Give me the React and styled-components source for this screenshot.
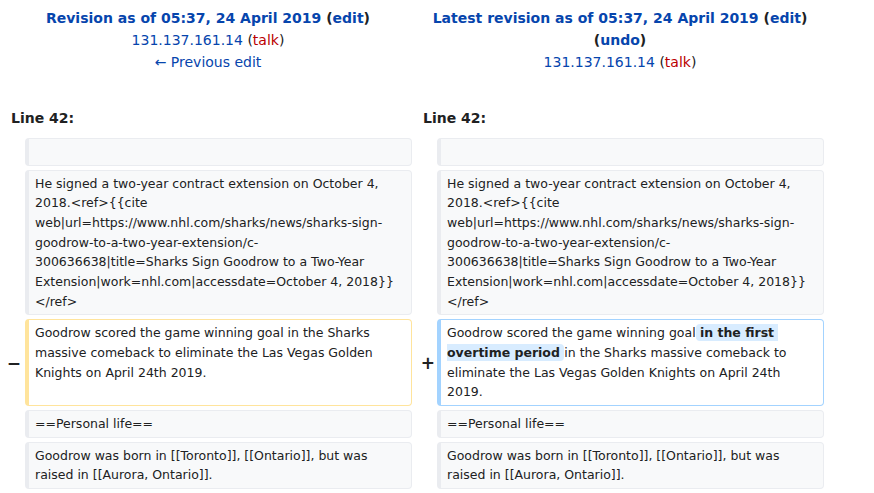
import styled, { createGlobalStyle } from 'styled-components';

const GlobalStyle = createGlobalStyle`
  body {
    margin: 0;
    background: #fff;
    color: #202122;
    font-family: "DejaVu Sans", sans-serif;
  }
`;

const Page = styled.div`
  width: 828px;
  padding: 0 4px;
  box-sizing: border-box;
`;

const TitleRow = styled.div`
  display: grid;
  grid-template-columns: 408px 408px;
  column-gap: 4px;
  padding-top: 7px;
`;

const Title = styled.div`
  text-align: center;
  font-size: 14px;
  line-height: 22px;
`;

const Line = styled.div`
  font-weight: ${(p) => (p.$bold ? 'bold' : 'normal')};
`;

const Link = styled.a`
  color: ${(p) => (p.$red ? '#ba0000' : '#0645ad')};
  text-decoration: none;
  cursor: pointer;
`;

const Paren = styled.span`
  color: #202122;
`;

const DiffGrid = styled.div`
  display: grid;
  grid-template-columns: 17px 387px 17px 387px;
  gap: 4px;
  margin-top: 35px;
`;

const LineNo = styled.div`
  grid-column: span 2;
  font-weight: bold;
  font-size: 14px;
  line-height: 20px;
  padding: 0 7px 6px;
`;

const Marker = styled.div`
  display: flex;
  align-items: center;
  justify-content: flex-end;
  font-weight: bold;
  font-size: 17px;
  color: #202122;
  margin-right: ${(p) => (p.$plus ? '-2px' : '0')};
`;

const borderColors = {
  context: '#eaecf0',
  deleted: '#ffe49c',
  added: '#a3d3ff',
};

const Cell = styled.div`
  grid-column: ${(p) => (p.$col ? `${p.$col} / span 1` : 'auto')};
  background: ${(p) => (p.$kind === 'context' ? '#f8f9fa' : '#fff')};
  color: #202122;
  border: 1px solid ${(p) => borderColors[p.$kind]};
  border-left-width: 4px;
  border-radius: 4px;
  padding: 3px 9px 3px 6px;
  min-height: 19.65px;
  font-size: 12.5px;
  line-height: 19.65px;
  white-space: pre-wrap;
  word-wrap: break-word;
`;

const Ins = styled.ins`
  background: #d8ecff;
  font-weight: bold;
  text-decoration: none;
  border-radius: 4px;
  padding: 1px 0;
`;

const contract =
  'He signed a two-year contract extension on October 4, 2018.<ref>{{cite web|url=https://www.nhl.com/sharks/news/sharks-sign-goodrow-to-a-two-year-extension/c-300636638|title=Sharks Sign Goodrow to a Two-Year Extension|work=nhl.com|accessdate=October 4, 2018}}</ref>';
const born = 'Goodrow was born in [[Toronto]], [[Ontario]], but was raised in [[Aurora, Ontario]].';

function ContextRow({ text }) {
  return (
    <>
      <Cell $kind="context" $col={2}>{text}</Cell>
      <Cell $kind="context" $col={4}>{text}</Cell>
    </>
  );
}

export default function App() {
  return (
    <Page>
      <GlobalStyle />
      <TitleRow>
        <Title>
          <Line $bold>
            <Link>Revision as of 05:37, 24 April 2019</Link> <Paren>(<Link>edit</Link>)</Paren>
          </Line>
          <Line>
            <Link>131.137.161.14</Link> <Paren>(<Link $red>talk</Link>)</Paren>
          </Line>
          <Line>
            <Link>← Previous edit</Link>
          </Line>
        </Title>
        <Title>
          <Line $bold>
            <Link>Latest revision as of 05:37, 24 April 2019</Link> <Paren>(<Link>edit</Link>)</Paren>
          </Line>
          <Line $bold>
            <Paren>(<Link>undo</Link>)</Paren>
          </Line>
          <Line>
            <Link>131.137.161.14</Link> <Paren>(<Link $red>talk</Link>)</Paren>
          </Line>
        </Title>
      </TitleRow>
      <DiffGrid>
        <LineNo>Line 42:</LineNo>
        <LineNo>Line 42:</LineNo>
        <ContextRow text="" />
        <ContextRow text={contract} />
        <Marker>−</Marker>
        <Cell $kind="deleted">
          Goodrow scored the game winning goal in the Sharks massive comeback to eliminate the Las Vegas Golden Knights on April 24th 2019.
        </Cell>
        <Marker $plus>+</Marker>
        <Cell $kind="added">
          Goodrow scored the game winning goal<Ins> in the first overtime period </Ins>in the Sharks massive comeback to eliminate the Las Vegas Golden Knights on April 24th 2019.
        </Cell>
        <ContextRow text="==Personal life==" />
        <ContextRow text={born} />
      </DiffGrid>
    </Page>
  );
}
